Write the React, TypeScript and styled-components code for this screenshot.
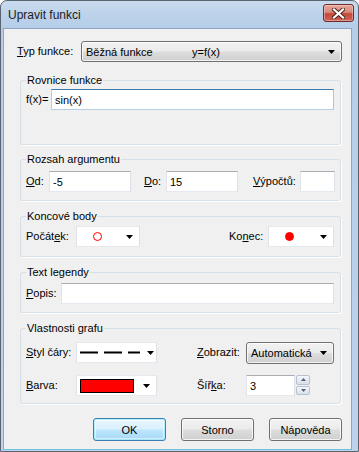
import React from "react";
import styled, { createGlobalStyle, css } from "styled-components";

const Global = createGlobalStyle`
  html, body { margin: 0; padding: 0; background: #ffffff; }
  body { font-family: "Liberation Sans", Arial, sans-serif; font-size: 11px; color: #000; }
  * { box-sizing: border-box; }
`;

const Window = styled.div`
  width: 359px;
  height: 452px;
  display: flex;
  flex-direction: column;
  border: 1px solid #5a6470;
  border-radius: 7px 7px 0 0;
  background: linear-gradient(180deg, #c9dbef 0px, #bcd2ea 14px, #b6cde8 27px, #bdd3eb 100%);
  overflow: hidden;
`;

const TitleBar = styled.div`
  height: 27px;
  flex: none;
  display: flex;
  align-items: center;
  justify-content: space-between;
  padding: 0 4px 0 7px;
`;

const Title = styled.span`
  font-size: 12px;
  color: #1b1b1b;
  margin-top: 1px;
`;

const CloseButton = styled.div`
  align-self: flex-start;
  margin-top: 3px;
  width: 31px;
  height: 18px;
  border: 1px solid #6e2d2a;
  border-radius: 3px;
  background: linear-gradient(180deg, #e8a49a 0%, #d88b7f 45%, #c5483a 55%, #cf6455 100%);
  box-shadow: inset 0 0 0 1px rgba(255, 255, 255, 0.35);
  display: flex;
  align-items: center;
  justify-content: center;
`;

const Client = styled.div`
  flex: 1;
  margin: 0 6px 1px 2px;
  background: #f0f0f0;
  border: 1px solid #8ea6c2;
  border-bottom-color: #6fc3e0;
  padding: 12px 10px 0 16px;
  display: flex;
  flex-direction: column;
`;

const Mn = styled.u`
  text-decoration: underline;
  text-underline-offset: 1px;
`;

const TypRow = styled.div`
  display: flex;
  align-items: center;
  margin: 0 -1px 0 -3px;
  height: 21px;
`;

const Label = styled.span<{ $w?: number }>`
  flex: none;
  width: ${(p) => (p.$w ? `${p.$w}px` : "auto")};
  white-space: nowrap;
  line-height: 13px;
`;

const DropButton = styled.div<{ $w?: number }>`
  flex: ${(p) => (p.$w ? "none" : "1")};
  width: ${(p) => (p.$w ? `${p.$w}px` : "auto")};
  height: ${(p) => (p.$w ? 22 : 21)}px;
  border: 1px solid #707070;
  border-radius: 3px;
  background: linear-gradient(180deg, #f2f2f2 0%, #ebebeb 48%, #dddddd 52%, #cfcfcf 100%);
  box-shadow: inset 0 0 0 1px rgba(255, 255, 255, 0.75);
  display: flex;
  align-items: center;
  padding: 0 6px 0 4px;
`;

const DropText = styled.span<{ $w?: number }>`
  width: ${(p) => (p.$w ? `${p.$w}px` : "auto")};
  flex: ${(p) => (p.$w ? "none" : "1")};
  white-space: nowrap;
`;

const Spacer = styled.span`
  flex: 1;
`;

const Group = styled.fieldset<{ $pt: number; $pb: number; $mt: number }>`
  margin: ${(p) => p.$mt}px 0 0 0;
  padding: ${(p) => p.$pt}px 6px ${(p) => p.$pb}px 5px;
  border: 1px solid #d5dfe5;
  border-radius: 3px;
  box-shadow: 1px 1px 0 #ffffff;
  min-inline-size: 0;
`;

const Legend = styled.legend`
  padding: 0 1px;
  line-height: 14px;
  font-size: 11px;
`;

const Row = styled.div`
  display: flex;
  align-items: center;
  height: 21px;
`;

const Grid = styled.div`
  display: grid;
  grid-template-columns: 50px 81px 40px 49px auto;
  grid-auto-rows: 21px;
  row-gap: 12px;
  align-items: center;
`;

const TextBox = styled.div<{ $w?: number; $focus?: boolean }>`
  flex: ${(p) => (p.$w ? "none" : "1")};
  width: ${(p) => (p.$w ? `${p.$w}px` : "auto")};
  height: 21px;
  background: #ffffff;
  border: 1px solid;
  border-color: #abadb3 #dbdfe6 #e3e9ef #e2e3ea;
  display: flex;
  align-items: center;
  padding: 0 3px;
  ${(p) =>
    p.$focus &&
    css`
      border-color: #3d7bad #a4c9e3 #b5cfe7 #b5cfe7;
    `}
`;

const Combo = styled.div<{ $w: number }>`
  width: ${(p) => p.$w}px;
  height: 21px;
  background: #ffffff;
  border: 1px solid;
  border-color: #e3e9ef #dbdfe6 #e3e9ef #e2e3ea;
  display: flex;
  align-items: center;
  padding: 0 6px 0 3px;
`;

const ComboBody = styled.div`
  flex: 1;
  display: flex;
  align-items: center;
  justify-content: center;
  height: 100%;
`;

const Dot = styled.span<{ $filled?: boolean }>`
  width: 9px;
  height: 9px;
  border-radius: 50%;
  border: 1px solid #ff0000;
  background: ${(p) => (p.$filled ? "#ff0000" : "#ffffff")};
  margin-right: ${(p) => (p.$filled ? 14 : 12)}px;
`;

const ColorSwatch = styled.span`
  flex: 1;
  height: 14px;
  margin-right: 9px;
  border: 1px solid #000;
  background: #ff0000;
`;

const SpinWrap = styled.div`
  display: flex;
  align-items: center;
  gap: 1px;
`;

const SpinButtons = styled.div`
  display: flex;
  flex-direction: column;
  gap: 0;
  height: 21px;
`;

const SpinBtn = styled.div`
  width: 14px;
  height: 10px;
  margin-bottom: 1px;
  border: 1px solid #b6c2cf;
  border-radius: 2px;
  background: linear-gradient(180deg, #f6f8fa 0%, #e6ebf0 50%, #d9e0e8 100%);
  display: flex;
  align-items: center;
  justify-content: center;
`;

const ButtonRow = styled.div`
  display: flex;
  justify-content: flex-end;
  gap: 15px;
  margin: 14px -1px 0 0;
`;

const Button = styled.div<{ $default?: boolean }>`
  width: 73px;
  height: 23px;
  border: 1px solid #707070;
  border-radius: 3px;
  background: linear-gradient(180deg, #f2f2f2 0%, #ebebeb 48%, #dddddd 52%, #cfcfcf 100%);
  box-shadow: inset 0 0 0 1px rgba(255, 255, 255, 0.75);
  display: flex;
  align-items: center;
  justify-content: center;
  font-size: 11px;
  ${(p) =>
    p.$default &&
    css`
      border-color: #3c7fb1;
      background: linear-gradient(180deg, #eaf6fd 0%, #d9f0fc 48%, #bee6fd 52%, #a7d9f5 100%);
      box-shadow: inset 0 0 0 1px #48d7fb55, inset 0 0 0 2px rgba(255, 255, 255, 0.5);
    `}
`;

const Arrow = () => (
  <svg width="7" height="4" viewBox="0 0 7 4" style={{ flex: "none" }}>
    <polygon points="0,0 7,0 3.5,4" fill="#000" />
  </svg>
);

const SpinArrow = ({ up }: { up?: boolean }) => (
  <svg width="5" height="3" viewBox="0 0 5 3">
    <polygon points={up ? "0,3 5,3 2.5,0" : "0,0 5,0 2.5,3"} fill="#4d6185" />
  </svg>
);

const Dashes = () => (
  <svg width="60" height="3" viewBox="0 0 60 3" style={{ flex: "none", marginRight: 7 }}>
    <line x1="0" y1="1.5" x2="60" y2="1.5" stroke="#000" strokeWidth="2" strokeDasharray="18 6" />
  </svg>
);

export default function App() {
  return (
    <>
      <Global />
      <Window>
        <TitleBar>
          <Title>Upravit funkci</Title>
          <CloseButton>
            <svg width="13" height="11" viewBox="0 0 13 11">
              <path
                d="M2 1.5 L11 9.5 M11 1.5 L2 9.5"
                stroke="#4a1f1a"
                strokeWidth="4"
                strokeLinecap="square"
              />
              <path
                d="M2 1.5 L11 9.5 M11 1.5 L2 9.5"
                stroke="#ffffff"
                strokeWidth="2.2"
                strokeLinecap="square"
              />
            </svg>
          </CloseButton>
        </TitleBar>
        <Client>
          <TypRow>
            <Label $w={64}>
              <Mn>T</Mn>yp funkce:
            </Label>
            <DropButton>
              <DropText $w={106}>Běžná funkce</DropText>
              <DropText>y=f(x)</DropText>
              <Arrow />
            </DropButton>
          </TypRow>

          <Group $mt={11} $pt={2} $pb={34}>
            <Legend>Rovnice funkce</Legend>
            <Row>
              <Label $w={25}>f(x)=</Label>
              <TextBox $focus>sin(x)</TextBox>
            </Row>
          </Group>

          <Group $mt={7} $pt={5} $pb={8}>
            <Legend>Rozsah argumentu</Legend>
            <Row>
              <Label $w={23}>
                <Mn>O</Mn>d:
              </Label>
              <TextBox $w={82}>-5</TextBox>
              <Label $w={13} />
              <Label $w={22}>
                <Mn>D</Mn>o:
              </Label>
              <TextBox $w={72}>15</TextBox>
              <Label $w={15} />
              <Label $w={47}>
                <Mn>V</Mn>ýpočtů:
              </Label>
              <TextBox $w={35} />
            </Row>
          </Group>

          <Group $mt={8} $pt={3} $pb={9}>
            <Legend>Koncové body</Legend>
            <Row>
              <Label $w={50}>
                Počát<Mn>e</Mn>k:
              </Label>
              <Combo $w={64}>
                <ComboBody>
                  <Dot />
                </ComboBody>
                <Arrow />
              </Combo>
              <Spacer />
              <Label $w={39}>
                Ko<Mn>n</Mn>ec:
              </Label>
              <Combo $w={66}>
                <ComboBody>
                  <Dot $filled />
                </ComboBody>
                <Arrow />
              </Combo>
            </Row>
          </Group>

          <Group $mt={8} $pt={4} $pb={8}>
            <Legend>Text legendy</Legend>
            <Row>
              <Label $w={35}>
                <Mn>P</Mn>opis:
              </Label>
              <TextBox />
            </Row>
          </Group>

          <Group $mt={8} $pt={7} $pb={7}>
            <Legend>Vlastnosti grafu</Legend>
            <Grid>
              <Label>
                <Mn>S</Mn>tyl čáry:
              </Label>
              <Combo $w={81}>
                <Dashes />
                <Arrow />
              </Combo>
              <span />
              <Label>
                <Mn>Z</Mn>obrazit:
              </Label>
              <DropButton $w={88}>
                <DropText>Automatická</DropText>
                <Arrow />
              </DropButton>

              <Label>
                <Mn>B</Mn>arva:
              </Label>
              <Combo $w={81}>
                <ColorSwatch />
                <Arrow />
              </Combo>
              <span />
              <Label>
                Šíř<Mn>k</Mn>a:
              </Label>
              <SpinWrap>
                <TextBox $w={49}>3</TextBox>
                <SpinButtons>
                  <SpinBtn>
                    <SpinArrow up />
                  </SpinBtn>
                  <SpinBtn>
                    <SpinArrow />
                  </SpinBtn>
                </SpinButtons>
              </SpinWrap>
            </Grid>
          </Group>

          <ButtonRow>
            <Button $default>OK</Button>
            <Button>Storno</Button>
            <Button>Nápověda</Button>
          </ButtonRow>
        </Client>
      </Window>
    </>
  );
}
